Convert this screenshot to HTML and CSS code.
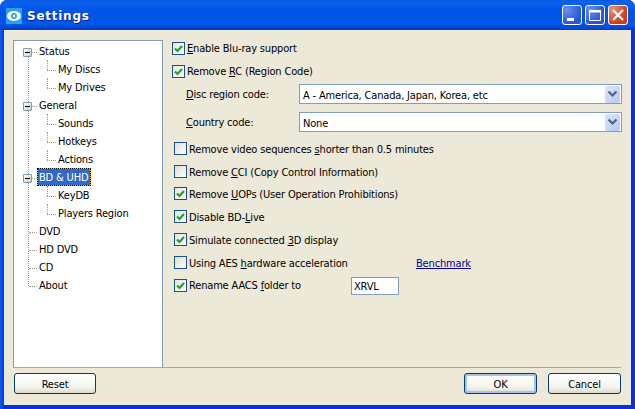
FILE: index.html
```html
<!DOCTYPE html>
<html lang="en">
<head>
  <meta charset="UTF-8" />
  <title>Settings</title>
  <link rel="stylesheet" href="styles.css">
</head>
<body>
  <div class="window">
    <div class="titlebar">
      <svg class="app-icon" width="16" height="16" viewBox="0 0 16 16">
        <rect width="16" height="16" fill="#2f9fe6"/>
        <ellipse cx="8" cy="8" rx="7" ry="5" fill="#fff"/>
        <circle cx="8" cy="8" r="3" fill="#2f9fe6"/>
        <circle cx="8" cy="8" r="1.2" fill="#fff"/>
      </svg>
      <span class="title">Settings</span>
      <div class="caption-btns">
        <div class="cap-btn">
          <svg width="20" height="20" viewBox="0 0 20 20"><rect x="5" y="13" width="7" height="3" fill="#fff"/></svg>
        </div>
        <div class="cap-btn">
          <svg width="20" height="20" viewBox="0 0 20 20"><path d="M4.5 5.5h11v10h-11z" fill="none" stroke="#fff"/><rect x="4" y="5" width="12" height="2.5" fill="#fff"/></svg>
        </div>
        <div class="cap-btn close">
          <svg width="20" height="20" viewBox="0 0 20 20"><path d="M5 5l10 10M15 5L5 15" stroke="#fff" stroke-width="2.2"/></svg>
        </div>
      </div>
    </div>

    <div class="client">
      <div class="main">
        <div class="tree">
          <div class="tree-line"></div>
          <div class="node"><span class="expander"></span><span class="node-text">Status</span></div>
          <div class="child"><span class="node-text">My Discs</span></div>
          <div class="child"><span class="node-text">My Drives</span></div>
          <div class="node"><span class="expander"></span><span class="node-text">General</span></div>
          <div class="child"><span class="node-text">Sounds</span></div>
          <div class="child"><span class="node-text">Hotkeys</span></div>
          <div class="child"><span class="node-text">Actions</span></div>
          <div class="node"><span class="expander"></span><span class="node-text selected">BD &amp; UHD</span></div>
          <div class="child"><span class="node-text">KeyDB</span></div>
          <div class="child"><span class="node-text">Players Region</span></div>
          <div class="node leaf"><span class="node-text">DVD</span></div>
          <div class="node leaf"><span class="node-text">HD DVD</span></div>
          <div class="node leaf"><span class="node-text">CD</span></div>
          <div class="node leaf"><span class="node-text">About</span></div>
        </div>

        <div class="options">
          <label class="check top"><span class="box on"><svg width="11" height="11" viewBox="0 0 11 11"><path d="M2 5.5l2.5 2.5L9 3" fill="none" stroke="#21a121" stroke-width="2.2"/></svg></span><span><u>E</u>nable Blu-ray support</span></label>
          <label class="check top"><span class="box on"><svg width="11" height="11" viewBox="0 0 11 11"><path d="M2 5.5l2.5 2.5L9 3" fill="none" stroke="#21a121" stroke-width="2.2"/></svg></span><span>Remove <u>R</u>C (Region Code)</span></label>

          <div class="field first">
            <span class="field-label"><u>D</u>isc region code:</span>
            <div class="combo"><span class="combo-text">A - America, Canada, Japan, Korea, etc</span>
              <span class="combo-btn"><svg width="11" height="8" viewBox="0 0 11 8"><path d="M1.5 1.5l4 4 4-4" fill="none" stroke="#4d6185" stroke-width="2.2"/></svg></span>
            </div>
          </div>
          <div class="field">
            <span class="field-label"><u>C</u>ountry code:</span>
            <div class="combo"><span class="combo-text">None</span>
              <span class="combo-btn"><svg width="11" height="8" viewBox="0 0 11 8"><path d="M1.5 1.5l4 4 4-4" fill="none" stroke="#4d6185" stroke-width="2.2"/></svg></span>
            </div>
          </div>

          <label class="check low"><span class="box"></span><span>Remove video sequences <u>s</u>horter than 0.5 minutes</span></label>
          <label class="check low"><span class="box"></span><span>Remove <u>C</u>CI (Copy Control Information)</span></label>
          <label class="check low tight"><span class="box on"><svg width="11" height="11" viewBox="0 0 11 11"><path d="M2 5.5l2.5 2.5L9 3" fill="none" stroke="#21a121" stroke-width="2.2"/></svg></span><span>Remove <u>U</u>OPs (User Operation Prohibitions)</span></label>
          <label class="check low"><span class="box on"><svg width="11" height="11" viewBox="0 0 11 11"><path d="M2 5.5l2.5 2.5L9 3" fill="none" stroke="#21a121" stroke-width="2.2"/></svg></span><span>Disable BD-<u>L</u>ive</span></label>
          <label class="check low"><span class="box on"><svg width="11" height="11" viewBox="0 0 11 11"><path d="M2 5.5l2.5 2.5L9 3" fill="none" stroke="#21a121" stroke-width="2.2"/></svg></span><span>Simulate connected <u>3</u>D display</span></label>
          <div class="check low">
            <span class="box"></span><span class="aes">Using AES <u>h</u>ardware acceleration</span>
            <a class="benchmark" href="#">Benchmark</a>
          </div>
          <div class="check">
            <span class="box on"><svg width="11" height="11" viewBox="0 0 11 11"><path d="M2 5.5l2.5 2.5L9 3" fill="none" stroke="#21a121" stroke-width="2.2"/></svg></span><span class="aes">Rename AACS <u>f</u>older to</span>
            <span class="folder-input">XRVL</span>
          </div>
        </div>
      </div>

      <div class="footer">
        <button class="btn reset">Reset</button>
        <button class="btn default">OK</button>
        <button class="btn">Cancel</button>
      </div>
    </div>
  </div>
</body>
</html>
```

FILE: styles.css
```css
html, body {
  margin: 0;
  padding: 0;
  background: #fff;
}

body {
  font-family: "DejaVu Sans Condensed", "DejaVu Sans", sans-serif;
  font-stretch: condensed;
  font-size: 11px;
  letter-spacing: -0.17px;
  color: #000;
}

.window {
  width: 635px;
  height: 409px;
  box-sizing: border-box;
  display: flex;
  flex-direction: column;
  overflow: hidden;
  border-radius: 7px 7px 0 0;
  background: linear-gradient(90deg, #0a5cf0 0, #0a4fe8 2px, #0831d9 4px);
}

.titlebar {
  height: 30px;
  flex: none;
  display: flex;
  align-items: center;
  padding: 0 6px;
  background: linear-gradient(#0a5ae0 0, #0a64f0 3px, #0255e6 8px, #0054e3 18px, #0258ec 24px, #0044cf 28px, #003cc0 30px);
}

.app-icon {
  margin-top: 2px;
}

.title {
  margin-left: 5px;
  margin-top: 1px;
  font-family: "DejaVu Sans", sans-serif;
  font-stretch: normal;
  font-weight: bold;
  font-size: 12px;
  letter-spacing: 0.75px;
  color: #fff;
  text-shadow: 1px 1px 0 #0f1f8c;
}

.caption-btns {
  margin-left: auto;
  margin-right: 1px;
  display: flex;
  gap: 3px;
}

.cap-btn {
  width: 20px;
  height: 20px;
  box-sizing: border-box;
  border: 1px solid #fff;
  border-radius: 3px;
  background: radial-gradient(circle at 20% 20%, #6f8fee, #2a55d8 70%);
  overflow: hidden;
}

.cap-btn svg {
  display: block;
  margin: -1px;
}

.cap-btn.close {
  background: radial-gradient(circle at 20% 20%, #e8917a, #d23c12 70%);
}

.client {
  flex: 1;
  min-height: 0;
  margin: 0 4px 4px 4px;
  background: #ece9d8;
  display: flex;
  flex-direction: column;
}

.main {
  margin: 10px 10px 0 9px;
  height: 328px;
  box-sizing: border-box;
  display: flex;
  border-bottom: 1px solid #aca899;
}

.tree {
  width: 150px;
  flex: none;
  box-sizing: border-box;
  position: relative;
  padding-top: 1px;
  background: #fff;
  border: 1px solid #7f9db9;
  border-bottom: 0;
}

.tree-line {
  position: absolute;
  left: 14px;
  top: 14px;
  height: 231px;
  border-left: 1px dotted #a09c8c;
}

.node,
.child {
  height: 18px;
  display: flex;
  align-items: center;
  position: relative;
}

.node {
  padding-left: 23px;
}

.child {
  padding-left: 42px;
}

.node::before,
.child::before {
  content: "";
  position: absolute;
  top: 10px;
  border-top: 1px dotted #a09c8c;
}

.node::before {
  left: 15px;
  width: 8px;
}

.child::before {
  left: 33px;
  width: 9px;
}

.child::after {
  content: "";
  position: absolute;
  left: 33px;
  top: 0;
  height: 10px;
  border-left: 1px dotted #a09c8c;
}

.expander {
  position: absolute;
  left: 9px;
  top: 6px;
  width: 9px;
  height: 9px;
  box-sizing: border-box;
  border: 1px solid #7f9db9;
  border-radius: 1px;
  background: linear-gradient(135deg, #fff, #cfcfc4);
  z-index: 1;
}

.expander::after {
  content: "";
  position: absolute;
  left: 1px;
  top: 3px;
  width: 5px;
  height: 1px;
  background: #000;
}

.node-text {
  position: relative;
  padding: 0 3px 0 2px;
  height: 18px;
  line-height: 20px;
  white-space: nowrap;
}

.node-text.selected {
  background: #316ac5;
  color: #fff;
  box-shadow: inset 0 0 0 1px #e8b040;
  outline: 1px dotted #000;
  outline-offset: -1px;
}

.options {
  flex: 1;
  padding: 2px 0 0 9px;
  display: flex;
  flex-direction: column;
  gap: 10px;
}

.check {
  height: 13px;
  display: flex;
  align-items: center;
  padding-left: 2px;
  white-space: nowrap;
}

.check.top {
  padding-left: 0;
}

.check.tight {
  margin-top: -1px;
}

.check.low > :not(.box) {
  padding-top: 2px;
}

.box {
  width: 13px;
  height: 13px;
  flex: none;
  box-sizing: border-box;
  margin-right: 2px;
  border: 1px solid #1c5180;
  background: linear-gradient(135deg, #dcdcd7, #fff);
  display: flex;
  align-items: center;
  justify-content: center;
}

.box.on {
  background: linear-gradient(135deg, #e4e4df, #fff);
}

.field {
  height: 20px;
  display: flex;
  align-items: center;
  padding-left: 14px;
}

.field.first {
  margin-top: -4px;
  margin-bottom: -2px;
}

.field-label {
  width: 113px;
  flex: none;
}

.combo {
  width: 323px;
  height: 20px;
  box-sizing: border-box;
  border: 1px solid #7f9db9;
  background: #fff;
  display: flex;
  align-items: center;
  justify-content: space-between;
  padding: 1px 1px 1px 3px;
}

.combo-text {
  padding-top: 2px;
}

.combo-btn {
  width: 15px;
  height: 17px;
  flex: none;
  border-radius: 2px;
  background: linear-gradient(135deg, #dce6fb, #b4c8f4);
  display: flex;
  align-items: center;
  justify-content: center;
}

.aes {
  width: 227px;
  flex: none;
}

.benchmark {
  color: #00009c;
}

.folder-input {
  margin-left: -65px;
  width: 48px;
  height: 18px;
  flex: none;
  box-sizing: border-box;
  border: 1px solid #7f9db9;
  background: #fff;
  padding: 1px 2px;
  line-height: 15px;
}

.footer {
  display: flex;
  gap: 11px;
  padding: 5px 10px 0;
}

.btn {
  width: 73px;
  height: 21px;
  box-sizing: border-box;
  padding: 1px 0 0;
  border: 1px solid #003c74;
  border-radius: 3px;
  background: linear-gradient(#fff, #f4f4ee 70%, #dcd8ca);
  font: inherit;
  letter-spacing: inherit;
  color: #000;
}

.btn.reset {
  width: 82px;
  margin-right: auto;
}

.btn.default {
  box-shadow: inset 0 0 0 2px #a9c4ec;
}
```
